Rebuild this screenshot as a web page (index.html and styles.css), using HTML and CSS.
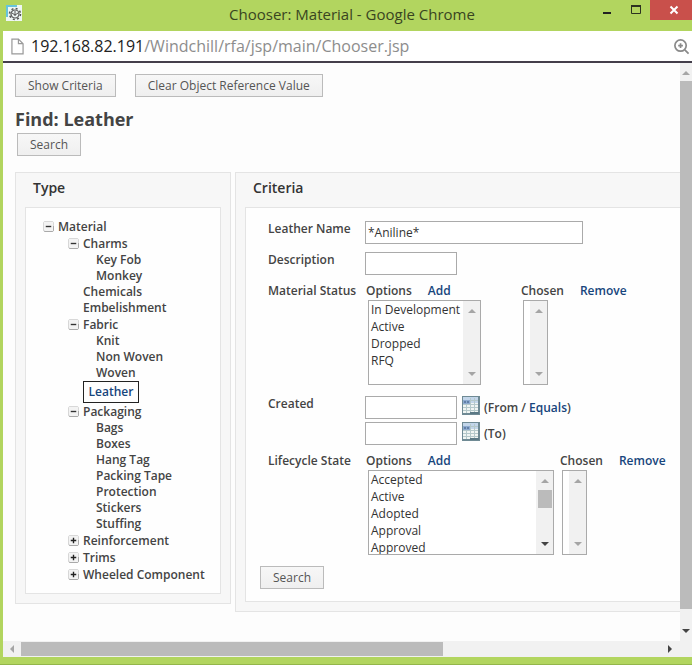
FILE: index.html
```html
<!DOCTYPE html>
<html lang="en">
<head>
<meta charset="utf-8">
<title>Chooser: Material - Google Chrome</title>
<link rel="stylesheet" href="styles.css">
</head>
<body>
<svg class="defs" aria-hidden="true">
  <symbol id="minus" viewBox="0 0 12 12"><path d="M1.5 .5h9l1 1v9l-1 1h-9l-1-1v-9z" fill="#f3f3f3" stroke="#d2d2d2"/><path d="M1 10.500l1 1h8.500l1-1v-5" fill="none" stroke="#a2a2a2"/><path d="M3 6h6" stroke="#333" stroke-width="1.500"/></symbol>
  <symbol id="plus" viewBox="0 0 12 12"><path d="M1.5 .5h9l1 1v9l-1 1h-9l-1-1v-9z" fill="#f3f3f3" stroke="#d2d2d2"/><path d="M1 10.500l1 1h8.500l1-1v-5" fill="none" stroke="#a2a2a2"/><path d="M3 6h6M6 3v6" stroke="#222" stroke-width="1.500"/></symbol>
  <symbol id="calendar" viewBox="0 0 18 19"><path d="M0 0h18v19H0z" fill="#6f8a94"/><path d="M1 1h15v16H1z" fill="#f0f5f3"/><path d="M1 1h15v6H1z" fill="#c3d6ea"/><path d="M1 4h7v4H1z" fill="#8eabd0"/><path d="M2 6h2M5 6h2" stroke="#36547f"/><path d="M8 4.500h8M1 8.500h15M1 11.500h15M1 14.500h15M4.500 8v9M8.500 2v15M12.500 2v15" stroke="#b5c8ca" fill="none"/><path d="M8 16h9v2H8z" fill="#5b7884"/></symbol>
  <symbol id="up" viewBox="0 0 8 4"><path d="M4 0l4 4H0z" fill="currentColor"/></symbol>
  <symbol id="down" viewBox="0 0 8 4"><path d="M0 0h8L4 4z" fill="currentColor"/></symbol>
</svg>
<div class="window">
  <header class="titlebar">
    <svg class="app-icon" viewBox="0 0 16 16" aria-hidden="true"><path d="M0 0h16v16H0z" fill="#eef6f4"/><path d="M0 0h11v2H2v10H0z" fill="#66c4dc"/><circle cx="9" cy="9" r="4" fill="none" stroke="#555" stroke-width="1.200"/><circle cx="9" cy="9" r="5.500" fill="none" stroke="#555" stroke-width="1.500" stroke-dasharray="2 2.320"/><path d="M6 8l3 2 3-2M9 6v5" fill="none" stroke="#555"/></svg>
    <span class="title">Chooser: Material - Google Chrome</span>
    <div class="controls">
      <button class="control" aria-label="Minimize"><svg viewBox="0 0 12 12"><path d="M2 9h8" stroke="#222" stroke-width="2"/></svg></button>
      <button class="control" aria-label="Maximize"><svg viewBox="0 0 12 12"><path d="M1.500 2.500h9v7h-9z" fill="none" stroke="#2c3320"/><path d="M1 2h10" stroke="#2c3320" stroke-width="2"/></svg></button>
      <button class="control close" aria-label="Close"><svg viewBox="0 0 12 12"><path d="M2.500 2.500l7 7M9.500 2.500l-7 7" stroke="#fff" stroke-width="2"/></svg></button>
    </div>
  </header>
  <div class="address">
    <svg class="page-icon" viewBox="0 0 14 18" aria-hidden="true"><path d="M1 1h7l5 5v11H1zM8 1v5h5" fill="#fff" stroke="#999" stroke-width="1.300"/></svg>
    <span class="url"><b>192.168.82.191</b>/Windchill/rfa/jsp/main/Chooser.jsp</span>
    <svg class="zoom-icon" viewBox="0 0 18 18" aria-hidden="true"><circle cx="8" cy="8" r="6" fill="none" stroke="#8a8a8a" stroke-width="1.800"/><path d="M5.500 8h5M8 5.500v5M12.500 12.500l4 4" stroke="#8a8a8a" stroke-width="1.800"/></svg>
  </div>
  <div class="viewport">
    <main class="page">
      <div class="actions"><button class="btn">Show Criteria</button><button class="btn">Clear Object Reference Value</button></div>
      <h1>Find: Leather</h1>
      <button class="btn search">Search</button>
      <div class="panels">
        <section class="panel type">
          <h2>Type</h2>
          <div class="inner">
            <ul class="tree">
              <li><div class="node"><button class="toggle" aria-label="Collapse Material"><svg><use href="#minus"/></svg></button><a href="#">Material</a></div>
                <ul>
                  <li><div class="node"><button class="toggle" aria-label="Collapse Charms"><svg><use href="#minus"/></svg></button><a href="#">Charms</a></div>
                    <ul><li><a href="#">Key Fob</a></li><li><a href="#">Monkey</a></li></ul></li>
                  <li class="leaf"><a href="#">Chemicals</a></li>
                  <li class="leaf"><a href="#">Embelishment</a></li>
                  <li><div class="node"><button class="toggle" aria-label="Collapse Fabric"><svg><use href="#minus"/></svg></button><a href="#">Fabric</a></div>
                    <ul><li><a href="#">Knit</a></li><li><a href="#">Non Woven</a></li><li><a href="#">Woven</a></li></ul></li>
                  <li class="leaf"><a href="#" class="selected">Leather</a></li>
                  <li><div class="node"><button class="toggle" aria-label="Collapse Packaging"><svg><use href="#minus"/></svg></button><a href="#">Packaging</a></div>
                    <ul><li><a href="#">Bags</a></li><li><a href="#">Boxes</a></li><li><a href="#">Hang Tag</a></li><li><a href="#">Packing Tape</a></li><li><a href="#">Protection</a></li><li><a href="#">Stickers</a></li><li><a href="#">Stuffing</a></li></ul></li>
                  <li><div class="node"><button class="toggle" aria-label="Expand Reinforcement"><svg><use href="#plus"/></svg></button><a href="#">Reinforcement</a></div></li>
                  <li><div class="node"><button class="toggle" aria-label="Expand Trims"><svg><use href="#plus"/></svg></button><a href="#">Trims</a></div></li>
                  <li><div class="node"><button class="toggle" aria-label="Expand Wheeled Component"><svg><use href="#plus"/></svg></button><a href="#">Wheeled Component</a></div></li>
                </ul>
              </li>
            </ul>
          </div>
        </section>
        <section class="panel criteria">
          <h2>Criteria</h2>
          <form class="inner">
            <div class="fields">
              <label for="name">Leather Name</label>
              <input id="name" class="wide" type="text" value="*Aniline*">
              <label for="desc">Description</label>
              <input id="desc" type="text">
              <label for="status">Material Status</label>
              <div class="pickers">
                <div class="picker">
                  <div class="head"><span>Options</span><a href="#">Add</a></div>
                  <div class="listbox"><select id="status" class="narrow" multiple size="5"><option>In Development</option><option>Active</option><option>Dropped</option><option>RFQ</option></select><div class="bar off"><svg><use href="#up"/></svg><svg><use href="#down"/></svg></div></div>
                </div>
                <div class="picker chosen">
                  <div class="head"><label for="status-chosen">Chosen</label><a href="#">Remove</a></div>
                  <div class="listbox"><select id="status-chosen" class="empty" multiple size="5"></select><div class="bar off"><svg><use href="#up"/></svg><svg><use href="#down"/></svg></div></div>
                </div>
              </div>
              <label for="from" class="date-label">Created</label>
              <div class="dates">
                <div class="date"><input id="from" type="text"><button type="button" class="cal" aria-label="Pick from date"><svg><use href="#calendar"/></svg></button><span>(From / <a href="#">Equals</a>)</span></div>
                <div class="date"><input id="to" type="text"><button type="button" class="cal" aria-label="Pick to date"><svg><use href="#calendar"/></svg></button><label for="to">(To)</label></div>
              </div>
              <label for="state">Lifecycle State</label>
              <div class="pickers">
                <div class="picker">
                  <div class="head"><span>Options</span><a href="#">Add</a></div>
                  <div class="listbox"><select id="state" class="broad" multiple size="5"><option>Accepted</option><option>Active</option><option>Adopted</option><option>Approval</option><option>Approved</option></select><div class="bar"><svg class="dim"><use href="#up"/></svg><i class="thumb"></i><svg><use href="#down"/></svg></div></div>
                </div>
                <div class="picker">
                  <div class="head"><label for="state-chosen">Chosen</label><a href="#">Remove</a></div>
                  <div class="listbox"><select id="state-chosen" class="empty" multiple size="5"></select><div class="bar off"><svg><use href="#up"/></svg><svg><use href="#down"/></svg></div></div>
                </div>
              </div>
            </div>
            <button type="button" class="btn">Search</button>
          </form>
        </section>
      </div>
    </main>
    <div class="vscroll"><svg class="dim"><use href="#up"/></svg><i class="thumb"></i><svg><use href="#down"/></svg></div>
  </div>
  <div class="hscroll">
    <svg class="dim" viewBox="0 0 4 8"><path d="M4 0v8L0 4z" fill="currentColor"/></svg>
    <div class="track"><i class="thumb"></i></div>
    <svg viewBox="0 0 4 8"><path d="M0 0v8l4-4z" fill="currentColor"/></svg>
  </div>
</div>
</body>
</html>
```
FILE: styles.css
```css
* { box-sizing: border-box; }
body { margin: 0; font: 12px/16px "Open Sans", "Noto Sans", sans-serif; color: #444; background: #b2d55f; }
button, input, select { font: inherit; margin: 0; }
a { color: #16457c; text-decoration: none; }
svg { display: block; flex: none; }
.defs { position: absolute; width: 0; height: 0; }

.window { display: flex; flex-direction: column; min-height: 100vh; padding: 0 0 7px 3px; border-bottom: 1px solid #93b64a; }
.titlebar { display: flex; align-items: flex-start; height: 31px; padding-left: 3px; }
.app-icon { width: 16px; height: 16px; margin-top: 5px; }
.title { flex: 1; padding-left: 90px; text-align: center; font-size: 15px; line-height: 29px; color: #39451f; white-space: nowrap; }
.controls { display: flex; }
.control { display: flex; align-items: center; justify-content: center; width: 29px; height: 20px; padding: 0; border: 0; background: none; }
.control svg { width: 12px; height: 12px; }
.close { width: 42px; padding-left: 6px; background: #c9504b; }
.address { display: flex; align-items: center; height: 32px; padding: 0 2px 0 8px; background: #fff; border-bottom: 2px solid #443f4b; }
.page-icon { width: 13px; height: 17px; }
.url { flex: 1; padding-left: 7px; font-size: 16px; line-height: 28px; color: #8d8d8d; white-space: nowrap; }
.url b { font-weight: 400; color: #222; }
.zoom-icon { width: 17px; height: 17px; }

.viewport { display: flex; flex: 1; background: #fdfdfd; }
.page { flex: 1; min-width: 0; padding: 11px 0 28px 12px; }
.btn { height: 23px; padding: 0 12px; border: 1px solid #bbb; background: linear-gradient(#f7f7f7, #efefef); color: #555; line-height: 20px; white-space: nowrap; }
.actions { display: flex; gap: 19px; }
h1 { margin: 10px 0 2px; font-size: 18px; line-height: 24px; font-weight: 700; color: #444; }
.search { display: block; margin-left: 2px; }
.panels { display: flex; align-items: flex-start; gap: 4px; margin-top: 16px; }
.panel { padding: 0 9px 9px; border: 1px solid #e4e4e4; background: #f7f7f7; }
.criteria { flex: 1; min-width: 0; padding-right: 0; border-right: 0; }
.type { flex: 0 0 216px; }
h2 { margin: 0; padding: 5px 8px 9px; font-size: 14px; line-height: 20px; font-weight: 600; color: #333; }
.inner { border: 1px solid #e4e4e4; background: #fefefe; }
.criteria .inner { border-right: 0; padding: 13px 0 12px 14px; }

.type .inner { padding: 10px 0 10px 17px; }
.tree, .tree ul { margin: 0; padding: 0; list-style: none; }
.tree a { display: block; font-weight: 600; color: #444; white-space: nowrap; }
.tree ul { padding-left: 25px; }
.tree ul ul { padding-left: 28px; }
.node { display: flex; align-items: center; gap: 4px; height: 17px; }
.toggle { padding: 0; border: 0; background: none; }
.toggle svg { width: 11px; height: 11px; }
.leaf { padding-left: 15px; }
.tree .selected { width: 56px; padding: 2px 0; border: 1px solid #222; text-align: center; color: #16457c; }

.fields { display: grid; grid-template-columns: 97px 1fr; row-gap: 8px; padding-left: 8px; margin-bottom: 11px; font-weight: 600; }
.fields input { justify-self: start; width: 92px; height: 23px; padding: 2px; border: 1px solid #aaa; background: #fff; color: #333; font-weight: 400; }
.fields .wide { width: 218px; }
.pickers { display: flex; gap: 8px; }
.head { display: flex; gap: 16px; height: 17px; margin-left: -2px; }
.picker { width: min-content; }
.picker:first-child { margin-left: 3px; }
.pickers .chosen { margin-left: 34px; }
.listbox { display: flex; width: max-content; height: 85px; border: 1px solid #aaa; background: #fff; }
.listbox select { padding: 0 2px; border: 0; outline: 0; background: none; color: #333; font-weight: 400; overflow: hidden; scrollbar-width: none; appearance: none; }
.listbox option { padding: 0; height: 17px; min-height: 17px; line-height: 17px; }
.narrow { width: 94px; }
.broad { width: 167px; }
.listbox .empty { width: 6px; padding: 0; }
.bar, .vscroll { display: flex; flex-direction: column; justify-content: space-between; align-items: center; background: #f1f1f1; color: #444; }
.bar { width: 17px; padding: 8px 0; }
.bar svg { width: 8px; height: 4px; }
.bar.off, .dim { color: #a5a5a5; }
.bar .thumb { width: 14px; height: 18px; margin: 7px 0 auto; background: #bbb; }
.date-label { padding-top: 3px; }
.dates { display: grid; gap: 3px; margin: 3px 0 0; }
.date { display: flex; align-items: center; }
.cal { margin: 0 4px 4px 5px; padding: 0; border: 0; background: none; }
.cal svg { width: 18px; height: 19px; }

.vscroll { width: 12px; padding-top: 8px; padding-bottom: 8px; overflow: hidden; }
.vscroll svg { width: 8px; height: 4px; }
.vscroll .thumb { flex: 1; width: 12px; margin: 6px 0 20px; background: #bbb; }
.hscroll { display: flex; align-items: center; height: 16px; padding: 0 20px 0 7px; background: #f1f1f1; color: #444; }
.hscroll svg { width: 4px; height: 8px; }
.track { flex: 1; margin: 0 7px; }
.hscroll .thumb { display: block; width: 66%; height: 14px; background: #bbb; }
```
